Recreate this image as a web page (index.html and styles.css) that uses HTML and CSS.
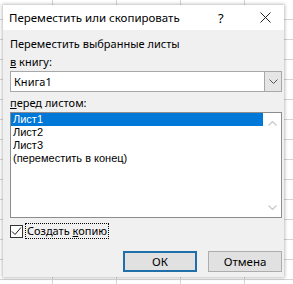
FILE: index.html
```html
<!DOCTYPE html>
<html lang="ru">
<head>
    <meta charset="UTF-8">
    <meta name="viewport" content="width=device-width, initial-scale=1.0">
    <title>Переместить или скопировать</title>
    <link rel="stylesheet" href="styles.css">
</head>
<body>
    <div class="dialog">
        <div class="titlebar">
            <span class="title">Переместить или скопировать</span>
            <span class="help">?</span>
            <span class="close">
                <svg width="11" height="11" viewBox="0 0 11 11">
                    <path d="M0.5 0.5 L10.5 10.5 M10.5 0.5 L0.5 10.5" stroke="#222" stroke-width="1" fill="none"/>
                </svg>
            </span>
        </div>
        <div class="content">
            <div class="label first">Переместить выбранные листы</div>
            <div class="label"><u>в</u> книгу:</div>
            <div class="combo">
                <span class="combo-text">Книга1</span>
                <span class="combo-btn">
                    <svg width="9" height="5" viewBox="0 0 9 5">
                        <path d="M0.5 0.5 L4.5 4.5 L8.5 0.5" stroke="#555" stroke-width="1" fill="none"/>
                    </svg>
                </span>
            </div>
            <div class="label"><u>п</u>еред листом:</div>
            <div class="listbox">
                <div class="items">
                    <div class="item selected">Лист1</div>
                    <div class="item">Лист2</div>
                    <div class="item">Лист3</div>
                    <div class="item">(переместить в конец)</div>
                </div>
                <div class="scroll">
                    <svg width="9" height="5" viewBox="0 0 9 5">
                        <path d="M0.5 4.5 L4.5 0.5 L8.5 4.5" stroke="#c8c8c8" stroke-width="1.2" fill="none"/>
                    </svg>
                    <svg width="9" height="5" viewBox="0 0 9 5">
                        <path d="M0.5 0.5 L4.5 4.5 L8.5 0.5" stroke="#c8c8c8" stroke-width="1.2" fill="none"/>
                    </svg>
                </div>
            </div>
            <div class="check-row">
                <span class="checkbox">
                    <svg width="11" height="11" viewBox="0 0 11 11">
                        <path d="M1 5.5 L4 8.5 L10 1.5" stroke="#222" stroke-width="1" fill="none"/>
                    </svg>
                </span>
                <span class="check-label">Создать <u>к</u>опию</span>
            </div>
            <div class="buttons">
                <button class="btn default">ОК</button>
                <button class="btn">Отмена</button>
            </div>
        </div>
    </div>
</body>
</html>
```

FILE: styles.css
```css
body {
    margin: 0;
    font-family: "Noto Sans", sans-serif;
    font-size: 11px;
    color: #000;
    background-color: #fff;
    background-image:
        repeating-linear-gradient(to right, transparent 0, transparent 52px, #d4d4d4 52px, #d4d4d4 53px, transparent 53px, transparent 64px),
        repeating-linear-gradient(to bottom, transparent 0, transparent 19px, #d4d4d4 19px, #d4d4d4 20px);
    height: 284px;
    overflow: hidden;
}
.dialog {
    width: 281px;
    height: 272px;
    margin: 5px 0 0 3px;
    background-color: #f0f0f0;
    box-shadow: 0 0 3px 1px rgba(0,0,0,0.25);
    display: flex;
    flex-direction: column;
}
.titlebar {
    height: 25px;
    background-color: #fff;
    display: flex;
    align-items: center;
    padding-left: 6px;
    font-size: 11.5px;
}
.title {
    flex: 1;
}
.help {
    width: 42px;
    font-size: 13px;
}
.close {
    width: 24px;
    display: flex;
    align-items: center;
}
.content {
    padding: 0 2px 0 7px;
}
.label {
    line-height: 18px;
}
.label.first {
    margin-top: 5px;
}
.combo {
    height: 21px;
    border: 1px solid #a8a8a8;
    background-color: #fff;
    display: flex;
    box-sizing: border-box;
    margin-bottom: 2px;
}
.combo-text {
    flex: 1;
    padding-left: 3px;
    line-height: 19px;
}
.combo-btn {
    width: 16px;
    background-color: #e5e5e5;
    border-left: 1px solid #a8a8a8;
    display: flex;
    align-items: center;
    justify-content: center;
}
.listbox {
    height: 106px;
    border: 1px solid #8c8c8c;
    background-color: #fff;
    box-sizing: border-box;
    display: flex;
}
.items {
    flex: 1;
    font-family: "Liberation Sans", sans-serif;
    font-size: 11px;
}
.item {
    height: 13px;
    line-height: 13px;
    padding-left: 2px;
}
.item.selected {
    background-color: #0078d7;
    color: #fff;
}
.scroll {
    width: 18px;
    display: flex;
    flex-direction: column;
    justify-content: space-between;
    align-items: center;
    padding: 8px 0 7px;
}
.check-row {
    display: flex;
    align-items: center;
    margin-top: 6px;
    height: 14px;
}
.checkbox {
    width: 13px;
    height: 13px;
    box-sizing: border-box;
    border: 1px solid #333;
    background-color: #fff;
    display: flex;
    align-items: center;
    justify-content: center;
}
.check-label {
    margin-left: 2px;
    padding: 0 1px;
    border: 1px dotted #000;
    line-height: 14px;
}
.buttons {
    display: flex;
    justify-content: flex-end;
    gap: 11px;
    margin-top: 13px;
}
.btn {
    font-family: "Noto Sans", sans-serif;
    font-size: 11.5px;
    width: 74px;
    height: 21px;
    padding: 0;
    background-color: #e1e1e1;
    border: 1px solid #adadad;
}
.btn.default {
    border: 2px solid #1f6fab;
}
```
